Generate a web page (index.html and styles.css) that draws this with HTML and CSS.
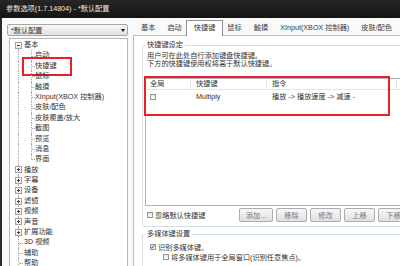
FILE: index.html
```html
<!DOCTYPE html>
<html lang="zh-CN">
<head>
  <meta charset="UTF-8" />
  <title>参数选项</title>
  <link rel="stylesheet" href="styles.css">
</head>
<body>
  <div class="window">
    <!-- 标题栏 -->
    <div class="titlebar">参数选项(1.7.14804) - *默认配置</div>

    <div class="client">
      <!-- 左侧：配置下拉 + 设置树 -->
      <div class="sidebar">
        <div class="combo"><span>*默认配置</span><i class="combo-arrow"></i></div>
        <div class="tree">
          <div class="node"><span class="cell start"><i class="box"></i></span><span>基本</span></div>
          <div class="node"><span class="cell line"></span><span class="cell sub tee"></span><span>启动</span></div>
          <div class="node marked"><span class="cell line"></span><span class="cell sub tee"></span><span>快捷键</span></div>
          <div class="node"><span class="cell line"></span><span class="cell sub tee"></span><span>鼠标</span></div>
          <div class="node"><span class="cell line"></span><span class="cell sub tee"></span><span>触摸</span></div>
          <div class="node"><span class="cell line"></span><span class="cell sub tee"></span><span>XInput(XBOX 控制器)</span></div>
          <div class="node"><span class="cell line"></span><span class="cell sub tee"></span><span>皮肤/配色</span></div>
          <div class="node"><span class="cell line"></span><span class="cell sub tee"></span><span>皮肤覆盖/放大</span></div>
          <div class="node"><span class="cell line"></span><span class="cell sub tee"></span><span>截图</span></div>
          <div class="node"><span class="cell line"></span><span class="cell sub tee"></span><span>预览</span></div>
          <div class="node"><span class="cell line"></span><span class="cell sub tee"></span><span>消息</span></div>
          <div class="node"><span class="cell line"></span><span class="cell sub corner"></span><span>界面</span></div>
          <div class="node"><span class="cell line"><i class="box plus"></i></span><span>播放</span></div>
          <div class="node"><span class="cell line"><i class="box plus"></i></span><span>字幕</span></div>
          <div class="node"><span class="cell line"><i class="box plus"></i></span><span>设备</span></div>
          <div class="node"><span class="cell line"><i class="box plus"></i></span><span>滤镜</span></div>
          <div class="node"><span class="cell line"><i class="box plus"></i></span><span>视频</span></div>
          <div class="node"><span class="cell line"><i class="box plus"></i></span><span>声音</span></div>
          <div class="node"><span class="cell line"><i class="box plus"></i></span><span>扩展功能</span></div>
          <div class="node"><span class="cell tee"></span><span>3D 视频</span></div>
          <div class="node"><span class="cell tee"></span><span>辅助</span></div>
          <div class="node"><span class="cell tee"></span><span>帮助</span></div>
        </div>
      </div>

      <!-- 右侧：选项卡 -->
      <div class="main">
        <div class="tabs">
          <span class="tab">基本</span>
          <span class="tab">启动</span>
          <span class="tab active">快捷键</span>
          <span class="tab">鼠标</span>
          <span class="tab">触摸</span>
          <span class="tab">XInput(XBOX 控制器)</span>
          <span class="tab">皮肤/配色</span>
        </div>

        <div class="page">
          <div class="group hotkeys">
            <div class="group-title">快捷键设定</div>
            <p class="hint">用户可在此处自行添加键盘快捷键。<br>下方的快捷键使用权将高于默认快捷键。</p>

            <div class="listview">
              <div class="lv-row lv-head">
                <span class="col c1">全局</span>
                <span class="col c2">快捷键</span>
                <span class="col c3">指令</span>
              </div>
              <div class="lv-row lv-item">
                <span class="col c1"><i class="check"></i></span>
                <span class="col c2">Multiply</span>
                <span class="col c3">播放 -&gt; 播放速度 -&gt; 减速 -</span>
              </div>
              <div class="mark"></div>
            </div>

            <div class="actions">
              <div class="opt ignore"><i class="check"></i>忽略默认快捷键</div>
              <div class="btns">
                <button class="wide">添加...</button>
                <button>移除</button>
                <button>修改</button>
                <button>上移</button>
                <button>下移</button>
              </div>
            </div>
          </div>

          <div class="group media">
            <div class="group-title">多媒体键设置</div>
            <div class="opt first">
              <i class="check on"><svg viewBox="0 0 6 6" width="6" height="6"><polyline points="1,3 2.4,4.6 5,1" fill="none" stroke="#2a5cb8" stroke-width="1.2"/></svg></i>识别多媒体键。
            </div>
            <div class="opt sub">
              <i class="check"></i>将多媒体键用于全局窗口(识别任意焦点)。
            </div>
          </div>
        </div>
      </div>
    </div>
  </div>
</body>
</html>
```

FILE: styles.css
```css
/* 基本重置 */
* {
  margin: 0;
  padding: 0;
  box-sizing: border-box;
}
body {
  width: 400px;
  height: 266px;
  overflow: hidden;
  background: #f9f9f9;
  color: #333;
  font-family: "Liberation Sans", "Noto Sans CJK SC", sans-serif;
  font-size: 7.2px;
}
.window {
  display: flex;
  flex-direction: column;
  height: 266px;
}

/* 标题栏 */
.titlebar {
  flex: none;
  height: 18px;
  line-height: 18px;
  padding-left: 6px;
  background: linear-gradient(#262626, #141414);
  color: #e8e8e8;
}

.client {
  flex: 1;
  display: flex;
  min-height: 0;
  overflow: hidden;
  border-left: 2px solid #2a2a2a;
}

/* 左侧 */
.sidebar {
  flex: none;
  width: 126px;
  padding: 6px 0 0 5px;
  display: flex;
  flex-direction: column;
}
.combo {
  height: 13px;
  display: flex;
  align-items: center;
  justify-content: space-between;
  padding: 0 2px 0 3px;
  border: 1px solid #a8a8a8;
  border-radius: 2px;
  background: linear-gradient(#f7f7f7, #e1e1e1);
}
.combo-arrow {
  border-left: 2.5px solid transparent;
  border-right: 2.5px solid transparent;
  border-top: 3px solid #111;
}

.tree {
  flex: 1;
  margin: 2px 0 0 2px;
  padding-top: 1px;
  background: #fff;
  border: 1px solid #b4b8be;
  border-bottom: none;
}
.node {
  position: relative;
  display: flex;
  height: 10.4px;
  line-height: 10.4px;
  white-space: nowrap;
}
.cell {
  position: relative;
  flex: none;
  width: 14px;
}
.cell.sub {
  width: 11px;
}
/* 树的虚线 */
.cell.line::before,
.cell.tee::before,
.cell.corner::before,
.cell.start::before {
  content: "";
  position: absolute;
  left: 8px;
  top: 0;
  bottom: 0;
  border-left: 1px dotted #a8a8a8;
}
.cell.start::before { top: 50%; }
.cell.corner::before { bottom: 50%; }
.cell.tee::after,
.cell.corner::after {
  content: "";
  position: absolute;
  left: 9px;
  top: 50%;
  width: 4px;
  border-top: 1px dotted #a8a8a8;
}
.cell.sub::before { left: 7px; }
.cell.sub::after { left: 8px; width: 3px; }

/* 展开/折叠小方块 */
.box {
  position: absolute;
  z-index: 1;
  left: 5px;
  top: 50%;
  width: 7px;
  height: 7px;
  margin-top: -3.5px;
  border: 1px solid #a0a0a0;
  background: linear-gradient(#fff, #e8e8e8);
}
.box::before {
  content: "";
  position: absolute;
  left: 1px;
  top: 2px;
  width: 3px;
  height: 1px;
  background: #444;
}
.box.plus::after {
  content: "";
  position: absolute;
  left: 2px;
  top: 1px;
  width: 1px;
  height: 3px;
  background: #444;
}

/* 红框标注 */
.node.marked::after {
  content: "";
  position: absolute;
  left: 12px;
  top: -3.8px;
  width: 46px;
  height: 15px;
  border: 2px solid #e8202a;
}

/* 右侧 */
.main {
  flex: none;
  width: 330px;
  padding: 2px 0 0 5px;
  display: flex;
  flex-direction: column;
}
.tabs {
  position: relative;
  z-index: 1;
  display: flex;
  height: 15px;
  padding-left: 2px;
}
.tab {
  padding: 0 6px;
  line-height: 15px;
  color: #3a3a3a;
  white-space: nowrap;
}
.tab.active {
  height: 16px;
  margin: 0 -2px -1px;
  padding: 0 7px;
  line-height: 14px;
  background: #fff;
  border: 1px solid #8e9096;
  border-bottom: none;
}

.page {
  flex: 1;
  padding-left: 8px;
  background: #fff;
  border-top: 1px solid #bcbcbc;
  border-left: 1px solid #bcbcbc;
}

/* 分组框 */
.group {
  display: flex;
  flex-direction: column;
  margin-right: 8px;
  border: 1px solid #d5dfe5;
  border-radius: 2px;
}
.group-title {
  align-self: flex-start;
  margin-top: -6px;
  padding: 0 2px;
  line-height: 10px;
  background: #fff;
}
.hotkeys {
  margin-top: 9px;
  padding: 0 0 4px 2px;
}
.hint {
  margin: 1.5px 0 0 2px;
  line-height: 8.6px;
}

/* 列表 */
.listview {
  position: relative;
  height: 128px;
  margin-top: 9.3px;
  background: #fff;
  border: 1px solid #b0b4ba;
}
.lv-row {
  display: flex;
  white-space: nowrap;
}
.lv-head {
  height: 11px;
  line-height: 9px;
  border-bottom: 1px solid #e5e5e5;
}
.lv-head .col {
  border-right: 1px solid #e5e5e5;
}
.lv-item {
  height: 14px;
  line-height: 14px;
}
.col {
  display: flex;
  align-items: center;
  padding-left: 5px;
}
.c1 { width: 45px; padding-left: 4px; }
.c2 { width: 76px; }
.c3 { width: 130px; }
.mark {
  position: absolute;
  left: -2px;
  top: -3px;
  width: 246px;
  height: 40px;
  border: 2px solid #e8202a;
}

/* 复选框 */
.check {
  flex: none;
  display: flex;
  width: 6px;
  height: 6px;
  border: 1px solid #949494;
  background: linear-gradient(#e4e4e4, #fff);
}
.check svg {
  margin: -1px 0 0 -1px;
}
.opt {
  display: flex;
  align-items: center;
  gap: 2px;
  white-space: nowrap;
}

.actions {
  display: flex;
  align-items: center;
  height: 14px;
  margin-top: 2px;
}
.ignore {
  width: 92px;
  margin-left: 2px;
}
.btns {
  display: flex;
  gap: 3px;
}
button {
  width: 31px;
  height: 14px;
  font: inherit;
  color: #777;
  border: 1px solid #adadad;
  border-radius: 2px;
  background: linear-gradient(#f8f8f8, #e0e0e0);
}
button.wide {
  width: 34px;
}

.media {
  margin-top: 7px;
  padding: 0 0 6px 2px;
}
.media .opt {
  height: 10px;
  margin-left: 5px;
}
.media .opt.first {
  margin-top: 3px;
}
.media .opt.sub {
  margin-left: 18px;
}
```
